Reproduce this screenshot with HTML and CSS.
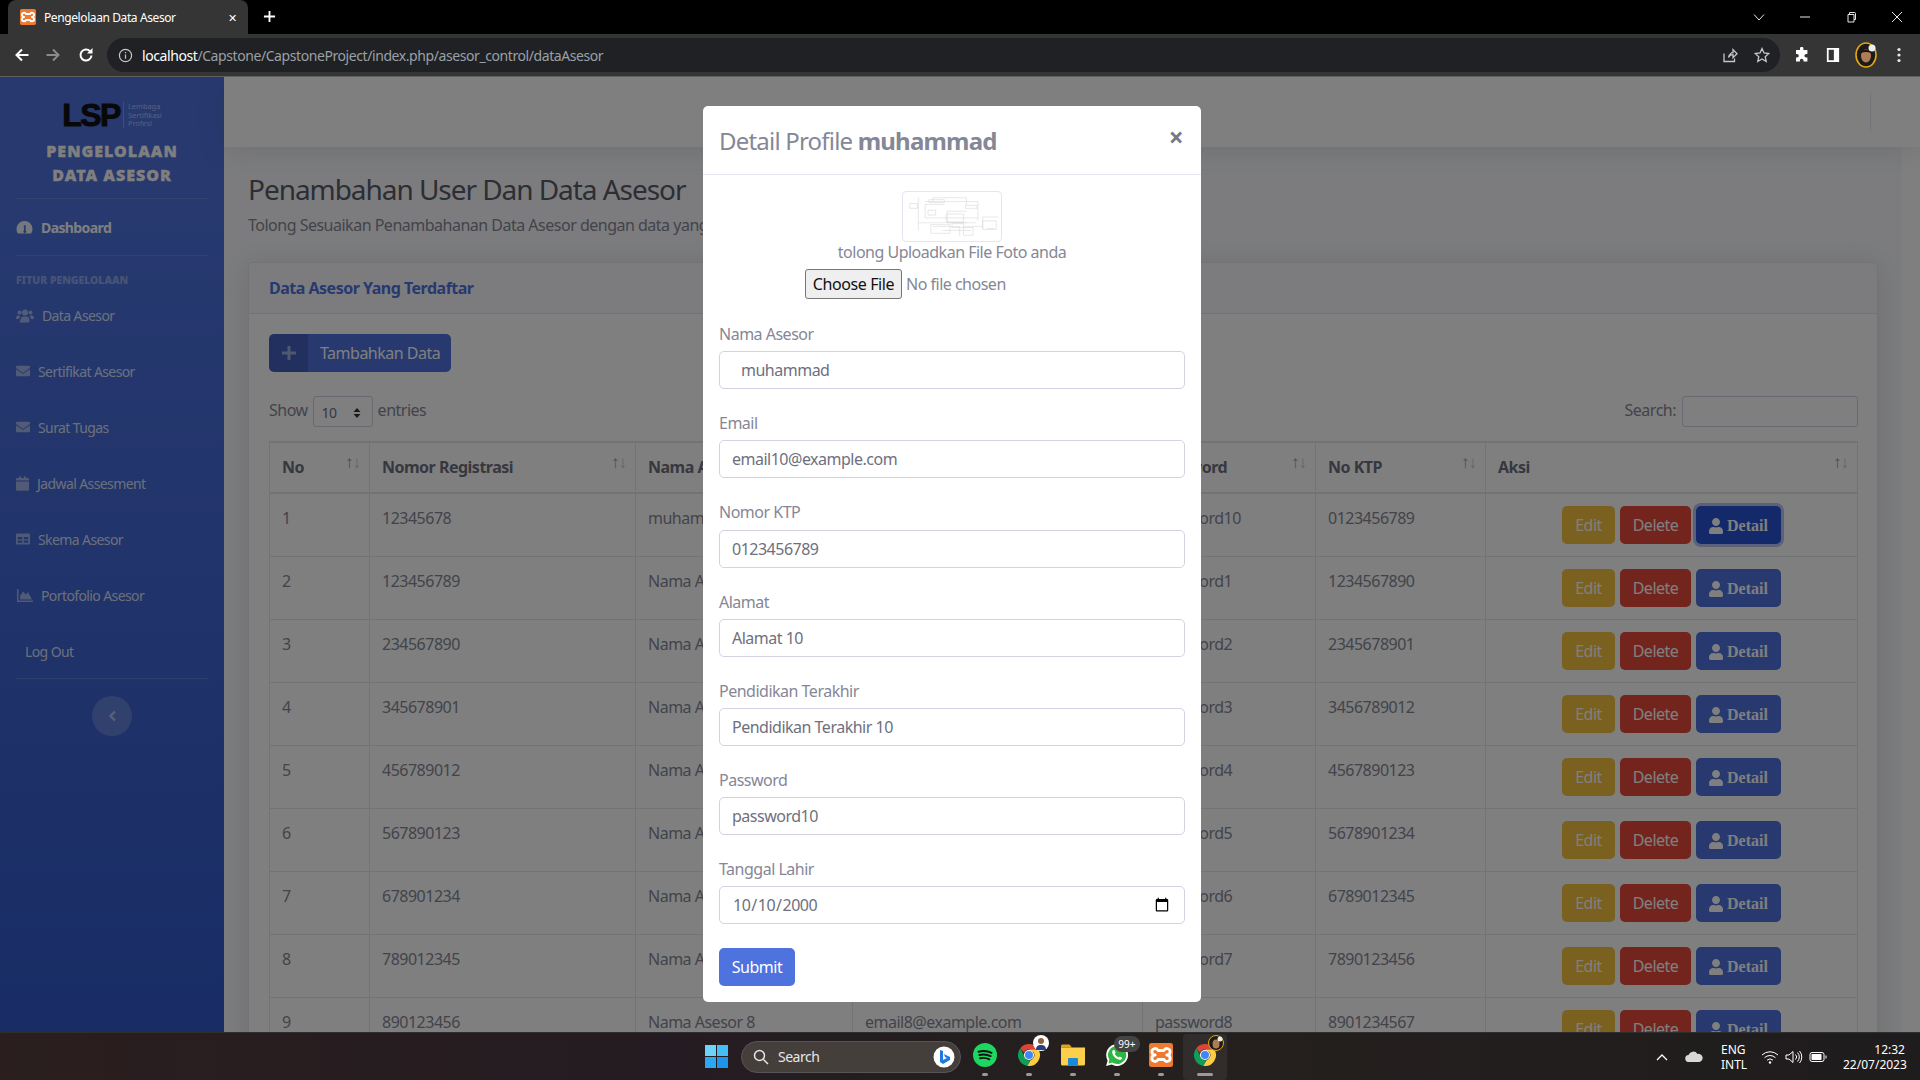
FILE: index.html
```html
<!DOCTYPE html>
<html lang="en">
<head>
  <meta charset="UTF-8">
  <meta name="viewport" content="width=device-width, initial-scale=1.0">
  <title>Pengelolaan Data Asesor</title>
  <link rel="stylesheet" href="styles.css">
</head>
<body>
  <svg class="defs" aria-hidden="true">
    <symbol id="ic-user" viewBox="0 0 448 512"><path d="M224 256c70.7 0 128-57.3 128-128S294.7 0 224 0 96 57.3 96 128s57.3 128 128 128zm89.6 32h-16.7c-22.2 10.2-46.9 16-72.9 16s-50.6-5.8-72.9-16h-16.7C60.2 288 0 348.2 0 422.4V464c0 26.5 21.5 48 48 48h352c26.5 0 48-21.5 48-48v-41.6c0-74.2-60.2-134.4-134.4-134.4z"/></symbol>
    <symbol id="ic-envelope" viewBox="0 0 512 512"><path d="M502.3 190.8c3.9-3.1 9.7-.2 9.7 4.7V400c0 26.5-21.5 48-48 48H48c-26.5 0-48-21.5-48-48V195.6c0-5 5.7-7.8 9.7-4.7 22.4 17.4 52.1 39.5 154.1 113.6 21.1 15.4 56.7 47.8 92.2 47.6 35.7.3 72-32.8 92.3-47.6 102-74.1 131.6-96.3 154-113.7zM256 320c23.2.4 56.6-29.2 73.4-41.4 132.7-96.3 142.8-104.7 173.4-128.7 5.8-4.5 9.2-11.5 9.2-18.9v-19c0-26.5-21.5-48-48-48H48C21.5 64 0 85.5 0 112v19c0 7.4 3.4 14.3 9.2 18.9 30.6 23.9 40.7 32.4 173.4 128.7 16.8 12.2 50.2 41.8 73.4 41.4z"/></symbol>
    <symbol id="ic-chrome" viewBox="0 0 24 24">
      <path fill="#db4437" d="M12 1a11 11 0 0 1 9.500 5.500H12a5.500 5.500 0 0 0-5 3.200L3.300 5.200A11 11 0 0 1 12 1z"/>
      <path fill="#0f9d58" d="M3.300 5.200 8 13.900a5.500 5.500 0 0 0 5.600 3.400L10.400 22.900A11 11 0 0 1 3.300 5.200z"/>
      <path fill="#ffcd40" d="M21.500 6.500A11 11 0 0 1 10.400 22.900l3.200-5.600a5.500 5.500 0 0 0 2.900-8.300l-4.500-2.500z"/>
      <circle cx="12" cy="12" r="5" fill="#fff"/><circle cx="12" cy="12" r="4" fill="#4285f4"/>
    </symbol>
    <symbol id="ic-xampp" viewBox="0 0 24 24">
      <rect width="24" height="24" rx="2.500" fill="#ee7a30"/>
      <path fill="none" stroke="#fff" stroke-width="2.800" stroke-linejoin="round" d="M9 7.500h6a3.200 3.200 0 1 1 2.800 4.500 3.200 3.200 0 1 1-2.800 4.500H9A3.200 3.200 0 1 1 6.200 12 3.200 3.200 0 1 1 9 7.500z"/>
    </symbol>
  </svg>

  <div class="browser">
    <div class="tabstrip">
      <div class="tab">
        <svg class="tab-icon"><use href="#ic-xampp"></use></svg>
        <span class="tab-title">Pengelolaan Data Asesor</span>
        <span class="tab-close">✕</span>
      </div>
      <svg class="new-tab" viewBox="0 0 14 14"><path d="M7 1v12M1 7h12"/></svg>
      <div class="win-controls">
        <svg viewBox="0 0 12 12"><path d="M1 3.500 6 9l5-5.500"/></svg>
        <svg viewBox="0 0 12 12"><path d="M1 6h10"/></svg>
        <svg viewBox="0 0 12 12"><path d="M3 3.500h6v7.500H3zM4.500 3.500V1.500h5a1 1 0 0 1 1 1v6H9"/></svg>
        <svg viewBox="0 0 12 12"><path d="M1 1l10 10M11 1 1 11"/></svg>
      </div>
    </div>

    <div class="toolbar">
      <svg class="nav-icon" viewBox="0 0 16 16"><path d="M14.500 8H2.500M8 2.500 2.500 8 8 13.500"/></svg>
      <svg class="nav-icon nav-off" viewBox="0 0 16 16"><path d="M1.500 8h12M8 2.500 13.500 8 8 13.500"/></svg>
      <svg class="nav-icon" viewBox="0 0 16 16"><path d="M13.500 8.500A5.500 5.500 0 1 1 12 4.200"/><path class="fill" d="M14.500 1v5.500H9z"/></svg>
      <div class="omnibox">
        <svg class="info-icon" viewBox="0 0 16 16"><circle cx="8" cy="8" r="6.500"/><path d="M8 7v4.500M8 4.200v1.300"/></svg>
        <span class="url"><span class="url-host">localhost</span>/Capstone/CapstoneProject/index.php/asesor_control/dataAsesor</span>
        <svg class="omni-icon omni-share" viewBox="0 0 16 16"><path d="M2 6.500V14.500h10.500v-3M6.500 10.500C7 7.500 9.500 5.500 11 5.500V2.500l4 4.200-4 4v-3c-2 0-3.500.8-4.500 2.800z"/></svg>
        <svg class="omni-icon" viewBox="0 0 16 16"><path d="M8 1.500 10 6l4.800.5-3.600 3.200 1 4.800L8 12l-4.200 2.500 1-4.800L1.200 6.500 6 6z"/></svg>
      </div>
      <svg class="tool-icon tool-puzzle" viewBox="0 0 16 16"><path d="M6 1.500a1.700 1.700 0 0 1 3.400 0V3h4v4h-1.200a1.800 1.800 0 0 0 0 3.600h1.200v4H9.500v-1a1.800 1.800 0 0 0-3.600 0v1H2v-4h1a1.800 1.800 0 0 0 0-3.600H2V3h4z"/></svg>
      <svg class="tool-icon tool-panel" viewBox="0 0 14 16"><path fill-rule="evenodd" d="M0 0h14v16H0zM2 2v12h6V2z"/></svg>
      <svg class="avatar" viewBox="0 0 22 26">
        <ellipse cx="11" cy="13" rx="10" ry="12" fill="#1b1b1b" stroke="#e2a80f" stroke-width="1.600"/>
        <ellipse cx="11" cy="14" rx="5" ry="6.500" fill="#b07c58"/>
        <path d="M5.500 11C6 7 16 7 16.500 11 13 9.500 9 9.500 5.500 11z" fill="#111"/>
        <circle cx="17" cy="6" r="3.500" fill="#eee"/>
      </svg>
      <svg class="tool-dots" viewBox="0 0 4 16"><circle cx="2" cy="2.500" r="1.600"/><circle cx="2" cy="8" r="1.600"/><circle cx="2" cy="13.500" r="1.600"/></svg>
    </div>

    <div class="viewport">
      <aside class="sidebar">
        <div class="brand">
          <div class="logo">
            <span class="logo-mark">LSP</span>
            <span class="logo-text">Lembaga<br>Sertifikasi<br>Profesi</span>
          </div>
          <div class="brand-name">PENGELOLAAN<br>DATA ASESOR</div>
        </div>
        <hr class="side-line">
        <a class="side-item side-active">
          <svg class="side-icon" viewBox="0 0 18 16"><path fill-rule="evenodd" d="M9 1a8.500 8.500 0 0 1 8.500 8.500c0 1.900-.5 3.500-1.500 5H2C1 13 .5 11.400.5 9.500A8.500 8.500 0 0 1 9 1zM8.200 5.500l.3 5.500a1.600 1.600 0 1 0 1.600 0l.3-5.500z"/></svg>
          Dashboard
        </a>
        <hr class="side-line">
        <div class="side-heading">FITUR PENGELOLAAN</div>
        <a class="side-item">
          <svg class="side-icon ic-users" viewBox="0 0 18 14"><circle cx="3.500" cy="4" r="2"/><circle cx="14.500" cy="4" r="2"/><circle cx="9" cy="4" r="3"/><path d="M0 10c0-2 1-3 2.500-3 .8 0 1.500.3 2 .8C3.700 8.500 3.200 9.500 3 10.500H1a1 1 0 0 1-1-.5zM18 10c0-2-1-3-2.500-3-.8 0-1.500.3-2 .8.8.7 1.300 1.700 1.500 2.700h2a1 1 0 0 0 1-.5zM4.500 12c0-2.500 1.500-4 3-4h3c1.500 0 3 1.500 3 4v1a1 1 0 0 1-1 1h-8a1 1 0 0 1-1-1z"/></svg>
          Data Asesor
        </a>
        <a class="side-item">
          <svg class="side-icon ic-mail"><use href="#ic-envelope"></use></svg>
          Sertifikat Asesor
        </a>
        <a class="side-item">
          <svg class="side-icon ic-mail"><use href="#ic-envelope"></use></svg>
          Surat Tugas
        </a>
        <a class="side-item">
          <svg class="side-icon ic-cal" viewBox="0 0 13 15"><path d="M0 5.500h13v8a1.300 1.300 0 0 1-1.300 1.300H1.300A1.300 1.300 0 0 1 0 13.500zM0 4.500V3.300A1.300 1.300 0 0 1 1.300 2H3V.5h2V2h3V.5h2V2h1.700A1.300 1.300 0 0 1 13 3.300v1.200z"/></svg>
          Jadwal Assesment
        </a>
        <a class="side-item">
          <svg class="side-icon ic-mail" viewBox="0 0 14 14"><path fill-rule="evenodd" d="M1.300 1.500h11.400A1.300 1.300 0 0 1 14 2.800v8.400a1.300 1.300 0 0 1-1.300 1.300H1.300A1.300 1.300 0 0 1 0 11.200V2.800a1.300 1.300 0 0 1 1.300-1.300zM1.700 5v2.200h4.500V5zM7.800 5v2.200h4.500V5zM1.700 8.500v2.200h4.500V8.500zM7.800 8.500v2.200h4.500V8.500z"/></svg>
          Skema Asesor
        </a>
        <a class="side-item">
          <svg class="side-icon ic-chart" viewBox="0 0 16 13"><path d="M0 0h1.500v11.500H16V13H0zM3 10.500V7l3-4.500 3 3 2-2.500 4 7.500z"/></svg>
          Portofolio Asesor
        </a>
        <a class="side-item side-logout">Log Out</a>
        <hr class="side-line side-line-last">
        <button class="side-toggle"><svg viewBox="0 0 8 12"><path d="M6.500 1.500 2 6l4.500 4.500"/></svg></button>
      </aside>

      <div class="main">
        <div class="topbar"><span class="topbar-line"></span></div>
        <div class="content">
          <h1 class="page-title">Penambahan User Dan Data Asesor</h1>
          <p class="page-sub">Tolong Sesuaikan Penambahanan Data Asesor dengan data yang sesuai</p>

          <div class="card">
            <div class="card-header">Data Asesor Yang Terdaftar</div>
            <div class="card-body">
              <button class="btn-split">
                <span class="btn-split-icon"><svg viewBox="0 0 14 14"><path d="M5.500 0h3v5.500H14v3H8.500V14h-3V8.500H0v-3h5.500z"/></svg></span>
                <span class="btn-split-text">Tambahkan Data</span>
              </button>

              <div class="table-tools">
                <label class="tool-show">Show
                  <span class="fake-select">10<svg viewBox="0 0 8 12"><path d="M4 1 7.500 5H.5zM4 11 .5 7h7z"/></svg></span>
                  entries</label>
                <label class="tool-search">Search: <span class="fake-input"></span></label>
              </div>

              <table class="data-table">
                <colgroup>
                  <col class="col-no"><col class="col-reg"><col class="col-name"><col class="col-email"><col class="col-pass"><col class="col-ktp"><col>
                </colgroup>
                <thead>
                  <tr>
                    <th>No<span class="sort">↑<i>↓</i></span></th>
                    <th>Nomor Registrasi<span class="sort">↑<i>↓</i></span></th>
                    <th>Nama Asesor<span class="sort">↑<i>↓</i></span></th>
                    <th>Email<span class="sort">↑<i>↓</i></span></th>
                    <th>Password<span class="sort">↑<i>↓</i></span></th>
                    <th>No KTP<span class="sort">↑<i>↓</i></span></th>
                    <th>Aksi<span class="sort">↑<i>↓</i></span></th>
                  </tr>
                </thead>
                <tbody>
                  <tr>
                    <td>1</td><td>12345678</td><td>muhammad</td><td>email10@example.com</td><td>password10</td><td>0123456789</td>
                    <td><div class="actions"><button class="btn btn-edit">Edit</button><button class="btn btn-delete">Delete</button><button class="btn btn-detail btn-focus"><svg><use href="#ic-user"></use></svg>Detail</button></div></td>
                  </tr>
                  <tr>
                    <td>2</td><td>123456789</td><td>Nama Asesor 1</td><td>email1@example.com</td><td>password1</td><td>1234567890</td>
                    <td><div class="actions"><button class="btn btn-edit">Edit</button><button class="btn btn-delete">Delete</button><button class="btn btn-detail"><svg><use href="#ic-user"></use></svg>Detail</button></div></td>
                  </tr>
                  <tr>
                    <td>3</td><td>234567890</td><td>Nama Asesor 2</td><td>email2@example.com</td><td>password2</td><td>2345678901</td>
                    <td><div class="actions"><button class="btn btn-edit">Edit</button><button class="btn btn-delete">Delete</button><button class="btn btn-detail"><svg><use href="#ic-user"></use></svg>Detail</button></div></td>
                  </tr>
                  <tr>
                    <td>4</td><td>345678901</td><td>Nama Asesor 3</td><td>email3@example.com</td><td>password3</td><td>3456789012</td>
                    <td><div class="actions"><button class="btn btn-edit">Edit</button><button class="btn btn-delete">Delete</button><button class="btn btn-detail"><svg><use href="#ic-user"></use></svg>Detail</button></div></td>
                  </tr>
                  <tr>
                    <td>5</td><td>456789012</td><td>Nama Asesor 4</td><td>email4@example.com</td><td>password4</td><td>4567890123</td>
                    <td><div class="actions"><button class="btn btn-edit">Edit</button><button class="btn btn-delete">Delete</button><button class="btn btn-detail"><svg><use href="#ic-user"></use></svg>Detail</button></div></td>
                  </tr>
                  <tr>
                    <td>6</td><td>567890123</td><td>Nama Asesor 5</td><td>email5@example.com</td><td>password5</td><td>5678901234</td>
                    <td><div class="actions"><button class="btn btn-edit">Edit</button><button class="btn btn-delete">Delete</button><button class="btn btn-detail"><svg><use href="#ic-user"></use></svg>Detail</button></div></td>
                  </tr>
                  <tr>
                    <td>7</td><td>678901234</td><td>Nama Asesor 6</td><td>email6@example.com</td><td>password6</td><td>6789012345</td>
                    <td><div class="actions"><button class="btn btn-edit">Edit</button><button class="btn btn-delete">Delete</button><button class="btn btn-detail"><svg><use href="#ic-user"></use></svg>Detail</button></div></td>
                  </tr>
                  <tr>
                    <td>8</td><td>789012345</td><td>Nama Asesor 7</td><td>email7@example.com</td><td>password7</td><td>7890123456</td>
                    <td><div class="actions"><button class="btn btn-edit">Edit</button><button class="btn btn-delete">Delete</button><button class="btn btn-detail"><svg><use href="#ic-user"></use></svg>Detail</button></div></td>
                  </tr>
                  <tr>
                    <td>9</td><td>890123456</td><td>Nama Asesor 8</td><td>email8@example.com</td><td>password8</td><td>8901234567</td>
                    <td><div class="actions"><button class="btn btn-edit">Edit</button><button class="btn btn-delete">Delete</button><button class="btn btn-detail"><svg><use href="#ic-user"></use></svg>Detail</button></div></td>
                  </tr>
                </tbody>
              </table>
            </div>
          </div>
        </div>
      </div>

      <!-- modal yang sedang terbuka -->
      <div class="backdrop">
        <div class="modal">
          <div class="modal-header">
            <h5 class="modal-title">Detail Profile <b>muhammad</b></h5>
            <span class="modal-close">×</span>
          </div>
          <form class="modal-body">
            <div class="photo-box">
              <svg class="thumb" viewBox="0 0 100 51">
                <g fill="none" stroke="#cfcfcf" stroke-width=".5">
                  <path d="M15 6v34M22 13h20M30 6h35M30 6v4M65 6v8M22 13v14M22 27h55M77 10v20M22 10h55M45 20h20M45 20v12h20M15 32h60M30 36h28M58 36v10M62 36h20M82 26v12M82 26h16M86 38h8M40 40h30"/>
                  <path d="M6 12h8v5H6zM25 19h8v5h-8zM26 8h16v3H26zM44 23h18v8H44zM50 33h12v4H50zM28 34h20v9H28zM62 37h10v8H62zM82 30h14v9H82zM64 14h12v3H64z"/>
                </g>
              </svg>
              <div class="photo-note">tolong Uploadkan File Foto anda</div>
              <input class="photo-file" type="file">
            </div>
            <div class="field">
              <label for="fNama">Nama Asesor</label>
              <input id="fNama" class="control control-first" type="text" value="muhammad">
            </div>
            <div class="field">
              <label for="fEmail">Email</label>
              <input id="fEmail" class="control" type="text" value="email10@example.com">
            </div>
            <div class="field">
              <label for="fKtp">Nomor KTP</label>
              <input id="fKtp" class="control" type="text" value="0123456789">
            </div>
            <div class="field">
              <label for="fAlamat">Alamat</label>
              <input id="fAlamat" class="control" type="text" value="Alamat 10">
            </div>
            <div class="field">
              <label for="fPend">Pendidikan Terakhir</label>
              <input id="fPend" class="control" type="text" value="Pendidikan Terakhir 10">
            </div>
            <div class="field">
              <label for="fPass">Password</label>
              <input id="fPass" class="control" type="text" value="password10">
            </div>
            <div class="field">
              <label for="fTgl">Tanggal Lahir</label>
              <input id="fTgl" class="control" type="date" value="2000-10-10">
            </div>
            <button class="btn-submit" type="button">Submit</button>
          </form>
        </div>
      </div>
    </div>

    <div class="taskbar">
      <div class="task-center">
        <svg class="win-logo" viewBox="0 0 23 23">
          <rect width="11" height="11" fill="#6fd3f7"/><rect x="12" width="11" height="11" fill="#45bdf5"/>
          <rect y="12" width="11" height="11" fill="#2aa9f2"/><rect x="12" y="12" width="11" height="11" fill="#1b95ea"/>
        </svg>
        <div class="task-search">
          <svg class="search-glass" viewBox="0 0 16 16"><circle cx="6.500" cy="6.500" r="5"/><path d="M10.500 10.500 15 15"/></svg>
          <span>Search</span>
          <svg class="search-bing" viewBox="0 0 22 22"><circle cx="11" cy="11" r="10.500" fill="#fff"/><path d="M7 4l3 1v9l4-2-2-1-1-3 6 3v3l-7 4-3-2z" fill="#1f7ae0"/></svg>
        </div>
        <div class="app app-run">
          <svg viewBox="0 0 22 22"><circle cx="11" cy="11" r="11" fill="#1ed760"/><path d="M5 8c4-1 8-1 12 1M5.800 11c3.500-.8 7-.6 10.400 1M6.500 14c2.800-.6 5.600-.4 8.500 1" fill="none" stroke="#111" stroke-width="1.700" stroke-linecap="round"/></svg>
        </div>
        <div class="app app-run">
          <svg><use href="#ic-chrome"></use></svg>
          <svg class="app-face" viewBox="0 0 16 16"><circle cx="8" cy="8" r="8" fill="#fff"/><circle cx="8" cy="6" r="3" fill="#8a5f42"/><path d="M3 15c0-4 2-5 5-5s5 1 5 5z" fill="#27407f"/></svg>
        </div>
        <div class="app app-run">
          <svg viewBox="0 0 24 22"><path d="M0 2a1.500 1.500 0 0 1 1.500-1.500h7l2.500 3H0z" fill="#e0a420"/><path d="M0 3.500h24V20a1.500 1.500 0 0 1-1.500 1.500h-21A1.500 1.500 0 0 1 0 20z" fill="#fcd04b"/><rect x="7" y="14" width="10" height="7.500" rx="1" fill="#1e88d8"/></svg>
        </div>
        <div class="app app-run">
          <svg viewBox="0 0 22 22"><path d="M11 1a10 10 0 0 0-8.600 15L1 21l5.200-1.300A10 10 0 1 0 11 1z" fill="#fff"/><path d="M11 2.800a8.200 8.200 0 0 0-7 12.500l-.8 3.400 3.500-.9A8.200 8.200 0 1 0 11 2.800z" fill="#2bb741"/><path d="M7.500 6.500c-.8.500-1.300 2-.5 3.700 1 2.200 3 4.300 5.500 5 1.800.5 3-.2 3.300-1.500l-2.200-1.400-1.100 1c-1.500-.6-2.800-1.900-3.500-3.400l.8-1.100-1.200-2.300z" fill="#fff"/></svg>
          <span class="app-badge">99+</span>
        </div>
        <div class="app app-run">
          <svg><use href="#ic-xampp"></use></svg>
        </div>
        <div class="app app-active">
          <svg><use href="#ic-chrome"></use></svg>
          <svg class="app-face app-face-avatar" viewBox="0 0 16 16"><circle cx="8" cy="8" r="7.500" fill="#1b1b1b" stroke="#e2a80f"/><ellipse cx="8" cy="9" rx="3.500" ry="4.500" fill="#b07c58"/><circle cx="12" cy="4" r="2.500" fill="#eee"/></svg>
        </div>
      </div>

      <div class="tray">
        <svg class="tray-chev" viewBox="0 0 12 8"><path d="M1 7 6 2l5 5"/></svg>
        <svg class="tray-cloud" viewBox="0 0 18 11"><path d="M4 11a3.500 3.500 0 0 1-.5-7A5 5 0 0 1 12.500 3 4 4 0 0 1 14.500 11z"/></svg>
        <div class="tray-lang">ENG<br>INTL</div>
        <svg class="tray-icon" viewBox="0 0 18 14"><path d="M1 5a11.500 11.500 0 0 1 16 0M3.500 7.700a8 8 0 0 1 11 0M6 10.200a4.500 4.500 0 0 1 6 0"/><circle class="fill" cx="9" cy="12.500" r="1.200"/></svg>
        <svg class="tray-icon" viewBox="0 0 18 14"><path d="M1 5v4h3l4 3.500v-11L4 5zM10.500 4.500a3.500 3.500 0 0 1 0 5M12.500 2.500a6.500 6.500 0 0 1 0 9M14.500 1a9 9 0 0 1 0 12"/></svg>
        <svg class="tray-icon" viewBox="0 0 18 12"><rect x="1" y="1.500" width="14" height="9" rx="2"/><rect class="fill" x="2.500" y="3" width="10" height="6" rx=".7"/><path d="M17 4.500v3"/></svg>
        <div class="tray-clock">12:32<br>22/07/2023</div>
      </div>
    </div>
  </div>
</body>
</html>
```

FILE: styles.css
```css
* {
  box-sizing: border-box;
}
html, body {
  height: 100%;
}
body {
  margin: 0;
  overflow: hidden;
  background: #fff;
  font-family: "Noto Sans", "Open Sans", sans-serif;
  font-size: 16px;
  letter-spacing: -0.5px;
  color: #858796;
}
.defs {
  display: none;
}
.browser {
  height: 100%;
  display: flex;
  flex-direction: column;
}

/* chrome: tab strip */
.tabstrip {
  height: 34px;
  flex: none;
  background: #000;
  display: flex;
  align-items: flex-end;
  padding-left: 8px;
}
.tab {
  width: 240px;
  height: 34px;
  background: #353535;
  border-radius: 8px 8px 0 0;
  display: flex;
  align-items: center;
  padding: 0 12px;
  color: #fff;
  font-size: 12px;
  letter-spacing: -0.4px;
}
.tab-icon {
  width: 16px;
  height: 16px;
  margin-right: 8px;
  flex: none;
}
.tab-title {
  flex: 1;
}
.tab-close {
  font-size: 11px;
  margin-right: -1px;
}
.new-tab {
  width: 13px;
  height: 13px;
  margin: 0 0 11px 15px;
  fill: none;
  stroke: #fff;
  stroke-width: 2;
}
.win-controls {
  margin-left: auto;
  height: 34px;
  display: flex;
  align-items: center;
  padding-right: 17px;
  gap: 34px;
}
.win-controls svg {
  width: 12px;
  height: 12px;
  fill: none;
  stroke: #e8e8e8;
  stroke-width: 1;
}

/* chrome: toolbar */
.toolbar {
  height: 43px;
  flex: none;
  background: #353535;
  border-bottom: 1px solid #5f5f5f;
  display: flex;
  align-items: center;
  padding-left: 14px;
}
.nav-icon {
  width: 16px;
  height: 16px;
  margin-right: 15px;
  fill: none;
  stroke: #fff;
  stroke-width: 2;
}
.nav-icon .fill {
  fill: #fff;
  stroke: none;
}
.nav-off {
  stroke: #8b8b8b;
  margin-right: 17px;
}
.omnibox {
  width: 1673px;
  height: 34px;
  margin-left: -2px;
  background: #202124;
  border-radius: 17px;
  display: flex;
  align-items: center;
  padding: 0 10px 0 11px;
  color: #9aa0a6;
  font-size: 14px;
  letter-spacing: -0.42px;
}
.info-icon {
  width: 15px;
  height: 15px;
  fill: none;
  stroke: #c4c7c5;
  stroke-width: 1.3;
  margin-right: 9px;
}
.url {
  flex: 1;
}
.url-host {
  color: #fff;
}
.omni-icon {
  width: 16px;
  height: 16px;
  fill: none;
  stroke: #c4c7c5;
  stroke-width: 1.3;
}
.omni-share {
  margin-right: 16px;
}
.tool-icon {
  fill: #fff;
  flex: none;
}
.tool-puzzle {
  width: 16px;
  height: 16px;
  margin-left: 14px;
}
.tool-panel {
  width: 14px;
  height: 14px;
  margin-left: 16px;
}
.avatar {
  width: 22px;
  height: 26px;
  margin-left: 15px;
}
.tool-dots {
  width: 4px;
  height: 16px;
  margin-left: 20px;
  fill: #e8e8e8;
}

/* isi halaman */
.viewport {
  position: relative;
  flex: 1;
  min-height: 0;
  display: flex;
  overflow: hidden;
}
.sidebar {
  width: 224px;
  flex: none;
  background: linear-gradient(180deg, #4e73df 10%, #224abe 100%) no-repeat;
  background-size: 100% 1400px;
  color: rgba(255,255,255,.8);
  font-size: 14px;
  letter-spacing: -0.6px;
}
.brand {
  height: 121px;
  padding-top: 24px;
  text-align: center;
}
.logo {
  height: 28px;
  display: flex;
  justify-content: center;
  align-items: center;
  gap: 3px;
}
.logo-mark {
  font-family: "Liberation Sans", sans-serif;
  font-weight: bold;
  font-size: 32px;
  line-height: 28px;
  letter-spacing: -1.5px;
  color: #111;
  -webkit-text-stroke: 1px #111;
}
.logo-text {
  border-left: 1px solid rgba(255,255,255,.3);
  padding-left: 4px;
  font-size: 7.4px;
  line-height: 8.5px;
  letter-spacing: 0;
  text-align: left;
  color: rgba(255,255,255,.55);
}
.brand-name {
  margin-top: 10px;
  font-size: 16px;
  font-weight: 900;
  line-height: 24px;
  letter-spacing: 1px;
  color: #fff;
  -webkit-text-stroke: .3px #fff;
}
.side-line {
  margin: 0 16px;
  height: 1px;
  border: 0;
  background: rgba(255,255,255,.15);
}
.side-line-last {
  margin-top: -1px;
}
.side-item {
  height: 56px;
  display: flex;
  align-items: center;
  gap: 8px;
  padding-left: 16px;
}
.side-active {
  color: #fff;
  font-weight: 700;
}
.side-icon {
  width: 17px;
  height: 15px;
  fill: rgba(255,255,255,.5);
  flex: none;
}
.side-active .side-icon {
  fill: rgba(255,255,255,.9);
}
.ic-users {
  width: 18px;
}
.ic-mail {
  width: 14px;
  height: 14px;
}
.ic-cal {
  width: 13px;
  height: 15px;
}
.ic-chart {
  width: 16px;
  height: 13px;
  margin-left: 1px;
}
.side-logout {
  padding-left: 25px;
}
.side-heading {
  height: 31px;
  padding-top: 18px;
  padding-left: 16px;
  font-size: 10.4px;
  line-height: 12px;
  font-weight: 900;
  letter-spacing: 0;
  color: rgba(255,255,255,.4);
}
.side-toggle {
  display: block;
  width: 40px;
  height: 40px;
  margin: 17px auto 0;
  padding: 0;
  border: 0;
  border-radius: 50%;
  background: rgba(255,255,255,.2);
}
.side-toggle svg {
  display: block;
  width: 9px;
  height: 12px;
  margin: auto;
  fill: none;
  stroke: rgba(255,255,255,.5);
  stroke-width: 2.4;
}
.main {
  flex: 1;
  min-width: 0;
  background: #fff;
}
.topbar {
  position: relative;
  z-index: 1;
  height: 70px;
  background: #fff;
  box-shadow: 0 2px 28px 0 rgba(58,59,69,.15);
  display: flex;
  justify-content: flex-end;
  align-items: center;
  padding-right: 49px;
}
.topbar-line {
  width: 1px;
  height: 38px;
  background: #e3e6f0;
}
.content {
  margin-right: 18px;
  background: #f8f9fc;
  padding: 25px 24px 0 24px;
  height: 1000px;
}
.page-title {
  margin: 0;
  font-size: 28px;
  font-weight: 400;
  line-height: 34px;
  letter-spacing: -1.05px;
  color: #5a5c69;
}
.page-sub {
  margin: 7px 0 25px;
  line-height: 24px;
  white-space: nowrap;
}
.card {
  background: #fff;
  border: 1px solid #e3e6f0;
  border-radius: 5px;
  box-shadow: 0 2px 28px 0 rgba(58,59,69,.15);
}
.card-header {
  height: 51px;
  padding: 13px 20px;
  line-height: 24px;
  background: #f8f9fc;
  border-bottom: 1px solid #e3e6f0;
  border-radius: 5px 5px 0 0;
  font-weight: 700;
  color: #4e73df;
}
.card-body {
  padding: 20px 19px 20px 20px;
}
.btn-split {
  display: flex;
  width: 182px;
  height: 38px;
  padding: 0;
  border: 0;
  border-radius: 5px;
  overflow: hidden;
  background: #4e73df;
  color: #fff;
  font: inherit;
  letter-spacing: inherit;
}
.btn-split-icon {
  width: 39px;
  height: 38px;
  flex: none;
  background: rgba(0,0,0,.15);
  display: flex;
  align-items: center;
  justify-content: center;
}
.btn-split-icon svg {
  width: 14px;
  height: 14px;
  fill: rgba(255,255,255,.5);
}
.btn-split-text {
  padding: 7px 0 7px 12px;
  line-height: 24px;
  white-space: nowrap;
}
.table-tools {
  margin: 24px 0 14px;
  height: 31px;
  display: flex;
  justify-content: space-between;
  align-items: center;
}
.tool-show, .tool-search {
  display: flex;
  align-items: flex-start;
  gap: 5px;
  line-height: 28px;
}
.tool-search {
  gap: 6px;
}
.fake-select {
  width: 60px;
  height: 31px;
  border: 1px solid #d1d3e2;
  border-radius: 3px;
  background: #fff;
  display: flex;
  align-items: center;
  justify-content: space-between;
  padding: 2px 11px 0 8px;
  font-size: 14px;
  color: #6e707e;
}
.fake-select svg {
  width: 8px;
  height: 12px;
  fill: #333;
}
.fake-input {
  width: 176px;
  height: 31px;
  border: 1px solid #d1d3e2;
  border-radius: 3px;
  background: #fff;
}
.data-table {
  width: 100%;
  table-layout: fixed;
  border-collapse: collapse;
  border-top: 2px solid #e3e6f0;
}
.col-no { width: 100px; }
.col-reg { width: 266px; }
.col-name { width: 217px; }
.col-email { width: 290px; }
.col-pass { width: 173px; }
.col-ktp { width: 170px; }
.data-table th, .data-table td {
  padding: 12px;
  border: 1px solid #e3e6f0;
  text-align: left;
  vertical-align: top;
  line-height: 24px;
  white-space: nowrap;
  font-weight: 400;
}
.data-table th {
  font-weight: 700;
  color: #6e707e;
  border-bottom: 2px solid #e3e6f0;
  padding-top: 12px;
  padding-bottom: 13px;
}
.sort {
  float: right;
  margin-right: -3px;
  margin-top: -4px;
  font-family: "Liberation Sans", sans-serif;
  font-weight: 400;
  font-size: 17px;
  letter-spacing: -1px;
  color: #9a9a9a;
}
.sort i {
  font-style: normal;
  color: #c8c8c8;
}
.actions {
  display: flex;
  justify-content: center;
  gap: 5px;
}
.btn {
  height: 38px;
  padding: 0;
  border: 0;
  border-radius: 5px;
  color: #fff;
  font: inherit;
  letter-spacing: inherit;
  display: flex;
  align-items: center;
  justify-content: center;
}
.btn-edit {
  width: 53px;
  background: #f6c23e;
}
.btn-delete {
  width: 71px;
  background: #e74a3b;
}
.btn-detail {
  width: 85px;
  padding: 1px 0 0 13px;
  justify-content: flex-start;
  background: #4e73df;
  font-family: "Liberation Serif", serif;
  font-weight: 700;
  letter-spacing: 0;
}
.btn-detail svg {
  width: 14px;
  height: 16px;
  margin-right: 4px;
  fill: #fff;
  flex: none;
}
.btn-focus {
  background: #2653d4;
  box-shadow: 0 0 0 3px rgba(105,136,228,.5);
}

/* modal */
.backdrop {
  position: absolute;
  inset: 0;
  z-index: 5;
  padding: 29px 16px 0 0;
  background: rgba(0,0,0,.5);
  display: flex;
  justify-content: center;
  align-items: flex-start;
}
.modal {
  width: 498px;
  background: #fff;
  border-radius: 5px;
}
.modal-header {
  height: 69px;
  padding: 17px 16px 0;
  border-bottom: 1px solid #e3e6f0;
  display: flex;
  justify-content: space-between;
}
.modal-title {
  margin: 0;
  font-size: 24px;
  font-weight: 400;
  line-height: 36px;
  letter-spacing: -0.8px;
}
.modal-close {
  font-size: 26px;
  font-weight: 700;
  line-height: 28px;
  margin-right: 2px;
  color: #777985;
}
.modal-body {
  padding: 16px;
}
.photo-box {
  text-align: center;
  margin-bottom: 23px;
}
.thumb {
  display: block;
  width: 100px;
  height: 51px;
  margin: 0 auto;
  border: 1px solid #e3e6f0;
  border-radius: 4px;
  background: #fff;
}
.photo-note {
  line-height: 20px;
  margin-bottom: 7px;
}
.photo-file {
  display: block;
  height: 30px;
  margin-left: 86px;
  font: 16px "Noto Sans", sans-serif;
  letter-spacing: -0.5px;
  line-height: 28px;
  width: 253px;
}
.photo-file::file-selector-button {
  width: 97px;
  height: 30px;
  padding: 0;
  margin-right: 4px;
  border: 1px solid #767676;
  border-radius: 3px;
  background: #efefef;
  color: #111;
  font: inherit;
  letter-spacing: -0.4px;
}
.field {
  margin-bottom: 22px;
}
.field label {
  display: block;
  line-height: 24px;
  margin-bottom: 5.2px;
}
.control {
  display: block;
  width: 100%;
  height: 38px;
  padding: 6px 12px;
  border: 1px solid #d1d3e2;
  border-radius: 5px;
  background: #fff;
  color: #6e707e;
  font: inherit;
  letter-spacing: inherit;
}
.control-first {
  padding-left: 21px;
}
.btn-submit {
  display: block;
  margin-top: 24px;
  width: 76px;
  height: 38px;
  border: 0;
  border-radius: 5px;
  background: #4e73df;
  color: #fff;
  font: inherit;
  letter-spacing: inherit;
}

/* taskbar windows */
.taskbar {
  height: 48px;
  flex: none;
  position: relative;
  z-index: 6;
  background: linear-gradient(90deg, #2a1e1e 0%, #241c22 35%, #25201e 60%, #1f1c1d 100%);
  border-top: 1px solid #2e2e2e;
  display: flex;
  align-items: center;
  color: #fff;
}
.task-center {
  margin-left: 705px;
  display: flex;
  align-items: center;
}
.win-logo {
  width: 23px;
  height: 23px;
}
.task-search {
  width: 220px;
  height: 32px;
  margin: 0 1.5px 0 13px;
  border-radius: 16px;
  border: 1px solid #555;
  background: #453f3c;
  display: flex;
  align-items: center;
  padding: 0 5px 0 11px;
  font-size: 14px;
  color: #e6e6e6;
}
.search-glass {
  width: 16px;
  height: 16px;
  margin-right: 9px;
  fill: none;
  stroke: #e6e6e6;
  stroke-width: 1.500;
}
.search-bing {
  width: 22px;
  height: 22px;
  margin-left: auto;
}
.app {
  position: relative;
  width: 44.1px;
  height: 46px;
  display: flex;
  align-items: center;
  justify-content: center;
  padding-bottom: 4px;
}
.app svg {
  width: 24px;
  height: 24px;
}
.app-run::after, .app-active::after {
  content: "";
  position: absolute;
  bottom: 4px;
  left: 50%;
  width: 6px;
  height: 3px;
  margin-left: -3px;
  border-radius: 2px;
  background: #9a9a9a;
}
.app-active {
  background: rgba(255,255,255,.06);
  border-radius: 4px;
}
.app-active::after {
  width: 16px;
  margin-left: -8px;
}
.app .app-face {
  position: absolute;
  top: 1px;
  right: 2px;
  width: 16px;
  height: 16px;
}
.app .app-face-avatar {
  right: 3px;
}
.app-badge {
  position: absolute;
  top: 2px;
  left: 19px;
  width: 26px;
  height: 16px;
  border-radius: 8px;
  background: #444;
  font-size: 10px;
  line-height: 16px;
  letter-spacing: 0;
  text-align: center;
}
.tray {
  margin-left: auto;
  display: flex;
  align-items: center;
  padding-right: 15px;
  font-size: 12px;
  line-height: 15px;
  letter-spacing: 0;
}
.tray-chev {
  width: 12px;
  height: 8px;
  fill: none;
  stroke: #fff;
  stroke-width: 1.300;
  margin-right: 17px;
}
.tray-cloud {
  width: 18px;
  height: 11px;
  fill: #d8d8d8;
  margin-right: 18px;
}
.tray-lang {
  width: 24px;
  margin-right: 16px;
}
.tray-icon {
  width: 18px;
  height: 14px;
  margin-right: 6px;
  fill: none;
  stroke: #fff;
  stroke-width: 1;
}
.tray-icon .fill {
  fill: #fff;
  stroke: none;
}
.tray-clock {
  width: 62px;
  margin-left: 10px;
  white-space: nowrap;
  text-align: right;
}
```
